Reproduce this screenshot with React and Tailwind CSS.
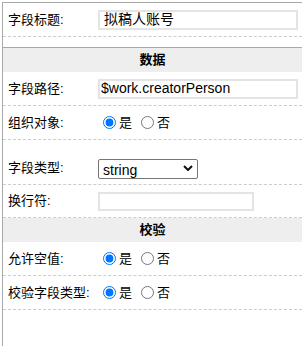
import React from 'react';

const font = "font-['Liberation_Sans','Noto_Sans_CJK_SC',sans-serif]";

const Row = ({ label, height = 'h-[34px]', extra = '', children }) => (
  <div className={`flex items-center ${height} ${extra} border-b border-dashed border-[#cccccc]`}>
    <div className="w-[95px] shrink-0 pl-[5px] text-[13px] text-black">{label}</div>
    <div className="flex items-center flex-1">{children}</div>
  </div>
);

const Section = ({ title, top }) => (
  <div
    className={`flex items-center justify-center bg-[#eeeeee] text-[13px] font-bold text-black ${
      top ? 'border-t border-[#a8a8a8] h-[25px]' : 'h-[24px]'
    }`}
  >
    {title}
  </div>
);

const YesNo = ({ name }) => (
  <div className="flex items-center text-[13px] text-black">
    <input type="radio" name={name} defaultChecked className="ml-[5px] mr-[3px] w-[13px] h-[13px]" />
    <span>是</span>
    <input type="radio" name={name} className="ml-[9px] mr-[3px] w-[13px] h-[13px]" />
    <span>否</span>
  </div>
);

const App = () => {
  return (
    <div className={`w-[302px] h-[346px] bg-white pl-[2px] pt-[2px] ${font}`}>
      <div className="h-full border-l border-t border-[#a8a8a8]">
        <Row label="字段标题:">
          <input
            defaultValue="拟稿人账号"
            className="w-[200px] h-[20px] border-2 border-[#e4e4e4] px-[4px] text-[14px] text-black outline-none"
          />
        </Row>
        <div className="h-[10px]" />
        <Section title="数据" top />
        <Row label="字段路径:">
          <input
            defaultValue="$work.creatorPerson"
            className="w-[200px] h-[20px] border-2 border-[#e4e4e4] px-[1px] text-[14px] text-black outline-none"
          />
        </Row>
        <Row label="组织对象:">
          <YesNo name="org" />
        </Row>
        <Row label="字段类型:" height="h-[45px]" extra="pt-[11px]">
          <div className="relative w-[100px] h-[20px]">
            <select className="appearance-none w-full h-full border border-[#767676] rounded-[2px] pl-[4px] text-[14px] text-black outline-none">
              <option>string</option>
            </select>
            <svg
              className="absolute right-[5px] top-[7px] pointer-events-none"
              width="10"
              height="6"
              viewBox="0 0 10 6"
            >
              <path d="M1 1 L5 5 L9 1" fill="none" stroke="#111" strokeWidth="2" />
            </svg>
          </div>
        </Row>
        <Row label="换行符:" height="h-[33px]">
          <input className="w-[156px] h-[19px] border-2 border-[#e4e4e4] text-[14px] outline-none" />
        </Row>
        <Section title="校验" />
        <Row label="允许空值:">
          <YesNo name="empty" />
        </Row>
        <Row label="校验字段类型:">
          <YesNo name="check" />
        </Row>
      </div>
    </div>
  );
};

export default App;
